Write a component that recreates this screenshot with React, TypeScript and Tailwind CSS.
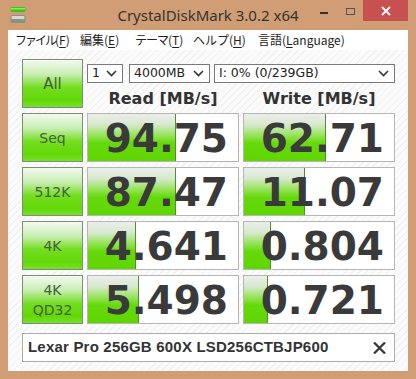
import React from "react";

type Row = {
  label: string[];
  read: string;
  write: string;
  readBar: number;
  writeBar: number;
};

const rows: Row[] = [
  { label: ["Seq"], read: "94.75", write: "62.71", readBar: 88, writeBar: 82 },
  { label: ["512K"], read: "87.47", write: "11.07", readBar: 88, writeBar: 61 },
  { label: ["4K"], read: "4.641", write: "0.804", readBar: 48, writeBar: 27 },
  { label: ["4K", "QD32"], read: "5.498", write: "0.721", readBar: 51, writeBar: 24 },
];

const menu = [
  { pre: "ファイル", key: "F", post: ")", w: "w-[65px]", t: "tracking-[-2px]" },
  { pre: "編集", key: "E", post: ")", w: "w-[55px]", t: "" },
  { pre: "テーマ", key: "T", post: ")", w: "w-[58px]", t: "tracking-[-1px]" },
  { pre: "ヘルプ", key: "H", post: ")", w: "w-[65px]", t: "" },
  { pre: "言語", key: "L", post: "anguage)", w: "w-auto", t: "" },
];

function Chevron() {
  return (
    <svg width="11" height="7" viewBox="0 0 11 7" className="flex-none">
      <path d="M1 1 L5.5 5.5 L10 1" fill="none" stroke="#333" strokeWidth="1.6" />
    </svg>
  );
}

function Select({ text, className }: { text: string; className: string }) {
  return (
    <div
      className={`h-[19px] border border-[#7a7a7a] bg-white flex items-center justify-between pl-[4px] pr-[5px] text-[12.5px] text-[#222] font-['DejaVu_Sans',sans-serif] ${className}`}
    >
      <span className="leading-none">{text}</span>
      <Chevron />
    </div>
  );
}

function GreenButton({ lines, big }: { lines: string[]; big?: boolean }) {
  return (
    <div className="border border-[#7e8c7a] bg-[linear-gradient(to_bottom,#f4faf1_0%,#c9eeb2_30%,#74de22_58%,#62d805_85%,#78df2c_100%)] flex flex-col items-center justify-center text-[#45603a] font-['DejaVu_Sans',sans-serif]">
      {lines.map((l) => (
        <div key={l} className={big ? "text-[15px] leading-[18px]" : "text-[14px] leading-[20px]"}>
          {l}
        </div>
      ))}
    </div>
  );
}

function Meter({ value, bar }: { value: string; bar: number }) {
  return (
    <div className="relative border border-[#b6b6b6] bg-white overflow-hidden">
      <div
        className="absolute left-0 top-0 bottom-0 border-r border-[#4f8f2c] bg-[linear-gradient(to_bottom,#eceeeb_0%,#d8e9cf_22%,#8ee34c_48%,#66d90c_62%,#5fd600_100%)]"
        style={{ width: bar }}
      />
      <div className="relative h-full flex items-center justify-end pr-[10px] text-[39px] font-bold leading-none text-[#3a3a3a] font-['DejaVu_Sans',sans-serif] pt-[1px]">
        {value}
      </div>
    </div>
  );
}

export default function App() {
  return (
    <div className="w-[416px] h-[379px] bg-[#d09d74] flex flex-col overflow-hidden">
      {/* title bar */}
      <div className="h-[30px] grid grid-cols-[1fr_auto_1fr] flex-none">
        <div className="pl-[10px] pt-[6px]">
          <svg width="16" height="17" viewBox="0 0 16 17">
            <rect x="0.5" y="1" width="15" height="5" rx="1.5" fill="#3fc21a" />
            <rect x="0.5" y="2" width="15" height="1.5" rx="0.7" fill="#8be86a" />
            <rect x="0.5" y="9" width="15" height="8" rx="2" fill="#8a8f8c" />
            <rect x="1.5" y="10" width="13" height="3" rx="1" fill="#d6d9d7" />
            <rect x="11" y="13" width="3" height="2" fill="#48d020" />
          </svg>
        </div>
        <div className="pt-[4px] text-[15px] text-[#333] font-['Noto_Sans',sans-serif] whitespace-nowrap">
          CrystalDiskMark 3.0.2 x64
        </div>
        <div className="flex justify-end items-start pr-[8px]">
          <div className="w-[25px] h-[21px] flex items-center justify-center mr-[2px]">
            <div className="w-[8px] h-[2px] bg-[#333] mt-[5px]" />
          </div>
          <div className="w-[25px] h-[21px] flex items-center justify-center">
            <div className="w-[9px] h-[7px] border border-[#555] mt-[1px]" />
          </div>
          <div className="w-[45px] h-[21px] bg-[#c75050] flex items-center justify-center">
            <svg width="10" height="10" viewBox="0 0 10 10">
              <path d="M1 1 L9 9 M9 1 L1 9" stroke="#fff" strokeWidth="1.8" />
            </svg>
          </div>
        </div>
      </div>

      {/* client */}
      <div className="mx-[8px] h-[341px] flex flex-col flex-none">
        <div className="h-[20px] bg-white flex items-center pl-[7px] text-[12px] text-[#222] font-['Noto_Sans_CJK_JP',sans-serif]">
          {menu.map((m) => (
            <div key={m.key} className={`${m.w} flex-none whitespace-nowrap leading-none`}>
              <span className={m.t}>{m.pre}</span>
              <span>(</span>
              <span className="underline underline-offset-2">{m.key}</span>
              {m.post}
            </div>
          ))}
        </div>

        <div className="flex-1 px-[14px] pt-[9px] bg-[repeating-linear-gradient(135deg,#f1f1f1_0px,#f1f1f1_1px,#fbfbfb_1px,#fbfbfb_5px)]">
          <div className="grid grid-cols-[61px_152px_152px] gap-x-[4px] gap-y-[5px] auto-rows-[49px]">
            <GreenButton lines={["All"]} big />
            <div className="col-span-2 flex flex-col">
              <div className="flex mt-[5px]">
                <Select text="1" className="w-[36px] mr-[6px]" />
                <Select text="4000MB" className="w-[81px] mr-[4px]" />
                <Select text="I: 0% (0/239GB)" className="flex-1" />
              </div>
              <div className="grid grid-cols-2 gap-x-[4px] mt-[7px] text-[16px] font-bold text-[#333] leading-[18px] font-['DejaVu_Sans',sans-serif]">
                <div className="text-center">Read [MB/s]</div>
                <div className="text-center">Write [MB/s]</div>
              </div>
            </div>

            {rows.map((r) => (
              <React.Fragment key={r.label.join("")}>
                <GreenButton lines={r.label} />
                <Meter value={r.read} bar={r.readBar} />
                <Meter value={r.write} bar={r.writeBar} />
              </React.Fragment>
            ))}
          </div>

          <div className="mt-[9px] h-[29px] w-[373px] border border-[#adadad] bg-white flex items-center justify-between pl-[5px] pr-[8px]">
            <span className="text-[15px] font-bold text-[#333] font-['Liberation_Sans',sans-serif] tracking-[0.2px]">
              Lexar Pro 256GB 600X LSD256CTBJP600
            </span>
            <svg width="13" height="12" viewBox="0 0 13 12">
              <path d="M1 0.5 L12 11.5 M12 0.5 L1 11.5" stroke="#3a3a3a" strokeWidth="2.3" />
            </svg>
          </div>
        </div>
      </div>
    </div>
  );
}
